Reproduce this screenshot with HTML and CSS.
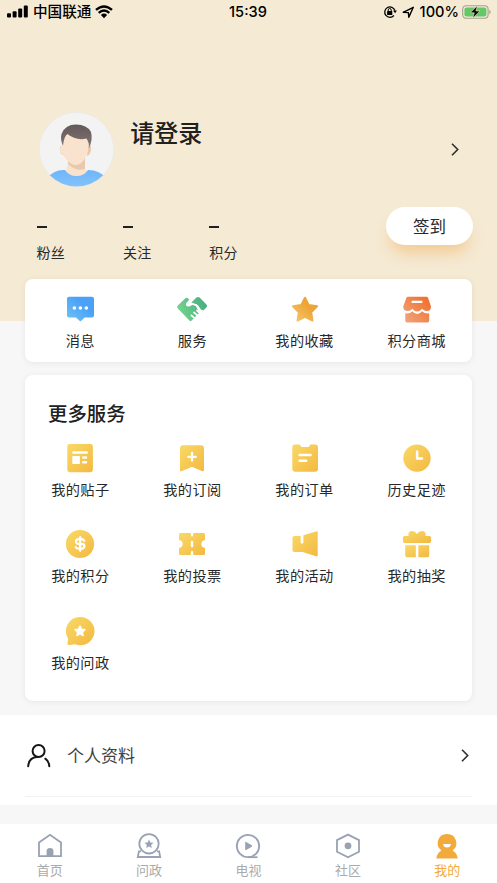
FILE: index.html
```html
<!DOCTYPE html>
<html lang="zh-CN">
<head>
<meta charset="utf-8">
<title>我的</title>
<link rel="stylesheet" href="styles.css">
</head>
<body>
<svg class="defs" aria-hidden="true">
  <defs>
    <linearGradient id="gold" x1="0" y1="0" x2="1" y2="1"><stop offset="0" stop-color="#f9d967"/><stop offset="1" stop-color="#f3b941"/></linearGradient>
    <linearGradient id="blue" x1="0" y1="1" x2="1" y2="0"><stop offset="0" stop-color="#6fc5f2"/><stop offset=".65" stop-color="#4ba0f8"/><stop offset="1" stop-color="#4ba0f8"/></linearGradient>
    <linearGradient id="green" gradientUnits="userSpaceOnUse" x1="-15" y1="5" x2="13" y2="-5"><stop offset="0" stop-color="#78d68c"/><stop offset="1" stop-color="#4baf83"/></linearGradient>
    <linearGradient id="amber" x1="0" y1="1" x2="1" y2="0"><stop offset="0" stop-color="#f3c96d"/><stop offset=".6" stop-color="#eea638"/><stop offset="1" stop-color="#ee9f30"/></linearGradient>
    <linearGradient id="orange" gradientUnits="userSpaceOnUse" x1="-12" y1="12" x2="12" y2="-10"><stop offset="0" stop-color="#f2a37c"/><stop offset="1" stop-color="#ee6f2d"/></linearGradient>
    <linearGradient id="hair" x1="0" y1="0" x2="0" y2="1"><stop offset="0" stop-color="#635858"/><stop offset="1" stop-color="#857575"/></linearGradient>
    <linearGradient id="shirt" x1="0" y1="0" x2="0" y2="1"><stop offset="0" stop-color="#6fb5fa"/><stop offset="1" stop-color="#83c3fa"/></linearGradient>
    <clipPath id="round"><circle cx="37.5" cy="37.5" r="37"/></clipPath>
  </defs>
</svg>

<header class="hero">
  <div class="status">
    <div class="carrier">
      <svg width="22" height="14" viewBox="0 0 22 14"><rect x="0" y="8.3" width="4" height="4.2" rx="1"/><rect x="5.6" y="6.2" width="4" height="6.3" rx="1"/><rect x="11.2" y="3.5" width="4" height="9" rx="1"/><rect x="16.8" y="0.5" width="4" height="12" rx="1"/></svg>
      <span>中国联通</span>
      <svg class="wifi" width="18" height="14" viewBox="0 0 18 14"><path d="M1 4.9Q9-2.1 17 4.9M3.7 7.9Q9 3.1 14.3 7.9" fill="none" stroke="#000" stroke-width="2.4"/><path d="M5.9 10Q9 7.2 12.1 10L9 13.2Z"/></svg>
    </div>
    <time>15:39</time>
    <div class="power">
      <svg width="14" height="14" viewBox="0 0 14 14"><path d="M10.9 10.5A5.2 5.2 0 1 1 11.9 5.5" fill="none" stroke="#000" stroke-width="1.3"/><path d="M10.1 5.4h3.8l-1.8 2.8z"/><rect x="4.1" y="6" width="5.2" height="4" rx=".5"/><path d="M5.2 6V5a1.5 1.5 0 0 1 3 0v1" fill="none" stroke="#000"/></svg>
      <svg class="locate" width="13" height="13" viewBox="0 0 13 13"><path d="M1.2 6.3 11.3 1.3 6.8 11.3 6.4 6.6Z" fill="none" stroke="#000" stroke-width="1.4" stroke-linejoin="round"/></svg>
      <span>100%</span>
      <svg width="29" height="14" viewBox="0 0 29 14"><rect x=".7" y=".7" width="25.4" height="12.6" rx="3.5" fill="none" stroke="#a79f90" stroke-width="1.1"/><rect x="2.4" y="2.4" width="22" height="9.2" rx="2" fill="#63c866"/><path d="M27.3 4.8q1.4.8 1.4 2.2t-1.4 2.2z" fill="#a79f90"/><path d="M15.4.8 8.3 7.8h4l-1.6 5.4 7.2-7.2h-4z" stroke="#f5ead4" stroke-width=".6"/></svg>
    </div>
  </div>

  <div class="user">
    <svg width="75" height="75" viewBox="0 0 75 75">
      <circle cx="37.5" cy="37.5" r="37.4" fill="#ebebeb"/><circle cx="37.5" cy="37.5" r="36.8" fill="#f3f3f3"/>
      <path d="M29 46h17v17H29z" fill="#e9c9ac"/>
      <path d="M29 52Q37 60 46 57L48 59Q46 66 37 65Q29 64 27 58Z" fill="#f9e3cf"/>
      <path clip-path="url(#round)" d="M8 66Q16 57 26 58Q30 64 37.5 64T49 58Q61 58 68 67V75H8Z" fill="url(#shirt)"/>
      <path d="M23 34q-3 0-2 5 1 4 4 4zM49 34q4-1 3 4-1 5-4 6z" fill="#ecc7a8"/>
      <path d="M24 28Q25 21 31 22Q38 27 49 25V35C49 44 43 53 37 53S25 45 24 42Q21 42 21 38T24 34Z" fill="#f9e3cf"/>
      <path d="M24 34Q21 27 22.5 22Q26 12.5 37 12.5Q48 12.5 52 20Q54 28 50 36Q50 30 47.5 26.5Q37 29 28.5 22Q25 24 24 34Z" fill="url(#hair)"/>
    </svg>
    <h1>请登录</h1>
    <svg class="go" width="8" height="13" viewBox="0 0 8 13"><path d="M1 .8 6.7 6.5 1 12.2"/></svg>
  </div>

  <div class="stats">
    <div class="stat"><i></i><span>粉丝</span></div>
    <div class="stat"><i></i><span>关注</span></div>
    <div class="stat"><i></i><span>积分</span></div>
    <button class="sign">签到</button>
  </div>
</header>

<main>
  <section class="card quick grid">
    <a><svg viewBox="-15 -15 30 30"><path d="M-11-12.3H12Q14-12.3 14-10.3V6.4Q14 8.4 12 8.4H4.7L1 12.1Q.4 12.6-.2 12.1L-4 8.4H-11Q-13 8.4-13 6.4V-10.3Q-13-12.3-11-12.3Z" fill="url(#blue)"/><g fill="#fff"><circle cx="-5.6" cy="-1" r="1.8"/><circle cx=".4" cy="-1" r="1.8"/><circle cx="6.3" cy="-1" r="1.8"/></g></svg>消息</a>
    <a><svg viewBox="-15 -15 30 30"><path d="M-6.6-10.8Q-5.5-11.9-4.4-10.8L-2.2-8.6 .6-11.4Q2-12.8 3.4-11.4L14.2-4.2Q15.4-3 14.2-1.8L1.2 11.5Q-.3 13-2 11.5L-14.2-.8Q-15.3-2-14.2-3.2Z" fill="none"/><path d="M-6.8-10.6Q-5.4-12-4-10.6L-2.4-9 -4.6-6.4Q-6.2-4.2-4-3.2 -1.8-2.6 .2-4.4L3.6-3.4 7.2 3.8 -.4 11.6Q-1.2 12.8-2.6 11.6L-14.2-.6Q-15.4-2-14.2-3.4ZM-.6-6.6 4.4-11.4Q6-12.8 7.6-11.4L14.4-4.4Q15.6-3 14.4-1.6L10.2 2.6 6-3.8Z" fill="url(#green)"/><path d="M-1.8-8.8-4.7-6Q-6-4.2-4.3-3.4-2.3-2.8 0-5L4.4-3.9 7.4 1 10.8 2M8.2 4.4l-3.8-3.2M5.8 6.6 1.4 3M3 9.4-1.2 6" fill="none" stroke="#fff" stroke-width="1.7" stroke-linejoin="round"/></svg>服务</a>
    <a><svg viewBox="-15 -15 30 30"><path d="M0-11.3 3.7-4.1 12-2.8 6.2 3.3 7.5 11.6 0 7.8-7.5 11.6-6.2 3.3-12-2.8-3.7-4.1Z" fill="url(#amber)" stroke="url(#amber)" stroke-width="2" stroke-linejoin="round"/></svg>我的收藏</a>
    <a><svg viewBox="-15 -15 30 30"><path d="M-9-12.3H9.5Q10.5-12.3 11-11.3L14-2.5Q14 2 9.6 2 7 2 5-.3 3 2.6.2 2.6T-4.6-.3Q-6.6 2-9.2 2-13.8 2-13.8-2.5L-10.6-11.3Q-10-12.3-9-12.3Z" fill="url(#orange)"/><path d="M-11.7 4.2Q-7.4 5-4.6 2.2-2.6 5 .2 5T5 2.2Q8 5 12.2 4.2V11.8Q12.2 13.5 10.5 13.5H-10Q-11.7 13.5-11.7 11.8Z" fill="url(#orange)"/><rect x="-5.5" y="-8.2" width="11" height="2.3" rx="1" fill="#fff"/></svg>积分商城</a>
  </section>

  <section class="card more">
    <h2>更多服务</h2>
    <div class="grid">
      <a><svg viewBox="-15 -15 30 30"><rect x="-12.7" y="-14" width="25.6" height="28.2" rx="2.4" fill="url(#gold)"/><path d="M-6.5-5.5H6.7M3.2-.6H6M3.2 4.2H6" stroke="#fff" stroke-width="2.5" stroke-linecap="round"/><rect x="-7.7" y="-2" width="7.6" height="8" rx=".8" fill="#fff"/></svg>我的贴子</a>
      <a><svg viewBox="-15 -15 30 30"><path d="M-9-12.7H9Q12-12.7 12-9.7V12Q12 13.8 10.4 13.2L0 8.8-10.4 13.2Q-12 13.8-12 12V-9.7Q-12-12.7-9-12.7Z" fill="url(#gold)"/><path d="M-3.8-1.2H3.8M0-5V2.6" stroke="#fff" stroke-width="2.3" stroke-linecap="round"/></svg>我的订阅</a>
      <a><svg viewBox="-15 -15 30 30"><path d="M-10.2-13.5H-6Q-4.8-13.5-4.6-12.5-4.3-11-3-11H3Q4.3-11 4.6-12.5 4.8-13.5 6-13.5H10Q13-13.5 13-10.5V10.7Q13 13.7 10 13.7H-9.7Q-12.7 13.7-12.7 10.7V-10.5Q-12.7-13.5-10.2-13.5Z" fill="url(#gold)"/><path d="M-5.4-3H5.6M-5.4 2.7H1.2" stroke="#fff" stroke-width="2.4" stroke-linecap="round"/></svg>我的订单</a>
      <a><svg viewBox="-15 -15 30 30"><circle cy=".1" r="13.7" fill="url(#gold)"/><path d="M.1-6.4V.4H5" fill="none" stroke="#fff" stroke-width="2.5" stroke-linecap="round" stroke-linejoin="round"/></svg>历史足迹</a>
      <a><svg viewBox="-15 -15 30 30"><circle r="14.1" fill="url(#gold)"/><path d="M4.2-3.3Q3.4-4.8 1-4.8H-1Q-4-4.8-4-2.4T-1-.1H1.4Q4.4-.1 4.4 2.2T1.4 4.7H-1Q-3.5 4.7-4.2 3.2M.2-6.8V6.8" fill="none" stroke="#fff" stroke-width="2.3" stroke-linecap="round"/></svg>我的积分</a>
      <a><svg viewBox="-15 -15 30 30"><path d="M-11.5-11H-1.2V-8.7Q-1.2-7.5 0-7.5T1.2-8.7V-11H11.5Q13-11 13-9.5V-4Q9.3-3.5 9.3 0T13 4V9.5Q13 11 11.5 11H1.2V8.2Q1.2 7 0 7T-1.2 8.2V11H-11.5Q-13 11-13 9.5V4Q-9.3 3.5-9.3 0T-13-4V-9.5Q-13-11-11.5-11Z" fill="url(#gold)"/><path d="M0-2V2" stroke="#fff" stroke-width="2.4" stroke-linecap="round"/></svg>我的投票</a>
      <a><svg viewBox="-15 -15 30 30"><path d="M-10.7-8H-4.4V-1.7Q-4.4-.3-3-.3T-1.6-1.7V-8.7L11-12.6Q12.7-13 12.7-11.2V11Q12.7 12.8 11 12.3L-2.4 8H-10.7Q-12.5 8-12.5 6.2V-6.2Q-12.5-8-10.7-8Z" fill="url(#gold)"/></svg>我的活动</a>
      <a><svg viewBox="-15 -15 30 30"><path d="M-12.6-8H-8.5Q-9.2-12.9-5-12.9-1.7-12.9 0-10 1.7-12.9 5-12.9 9.2-12.9 8.5-8H12.6Q14.1-8 14.1-6.5V-2.4Q14.1-1 12.6-1H-12.6Q-14-1-14-2.4V-6.5Q-14-8-12.6-8Z" fill="url(#gold)"/><path d="M-11.8 1.2H-1.2V13.2H-10Q-11.8 13.2-11.8 11.4ZM1.4 1.2H12.2V11.4Q12.2 13.2 10.4 13.2H1.4Z" fill="url(#gold)"/></svg>我的抽奖</a>
      <a><svg viewBox="-15 -15 30 30"><path d="M0-14A14.1 14.1 0 1 1-4.8 13.2L-10.8 13.9Q-13 14-12.5 12L-11.8 7.7A14.1 14.1 0 0 1 0-14Z" fill="url(#gold)"/><path d="M0-5.2 1.6-1.9 5.2-1.4 2.6 1.1 3.2 4.7 0 3-3.2 4.7-2.6 1.1-5.2-1.4-1.6-1.9Z" fill="#fff" stroke="#fff" stroke-width="1.2" stroke-linejoin="round"/></svg>我的问政</a>
    </div>
  </section>

  <section class="list">
    <a class="row">
      <svg width="24" height="24" viewBox="0 0 24 24" fill="none" stroke="#161616" stroke-width="2"><circle cx="11.6" cy="7" r="6"/><path d="M1.2 22.3Q1.8 13.7 10 13M18.3 14.7Q22.1 17.2 22.3 22.3" stroke-linecap="round"/></svg>
      <span>个人资料</span>
      <svg class="go" width="8" height="13" viewBox="0 0 8 13"><path d="M1 .8 6.7 6.5 1 12.2"/></svg>
    </a>
  </section>
</main>

<nav class="tabs">
  <a><svg viewBox="0 0 28 28"><path d="M3 10.5 14 2.8 25 10.5V24.2H3Z"/><path class="solid" d="M10.6 24V19.2Q10.6 16 14 16T17.4 19.2V24Z"/></svg>首页</a>
  <a><svg viewBox="0 0 28 28"><circle cx="14" cy="11.8" r="9.7"/><path d="M6 19.3H3.9L2.8 25H25.2L24.1 19.3H22"/><path class="solid" d="M14 7.5 15.3 10.4 18.5 10.8 16.1 12.9 16.8 16 14 14.5 11.2 16 11.9 12.9 9.5 10.8 12.7 10.4Z"/></svg>问政</a>
  <a><svg viewBox="0 0 28 28"><circle cx="14" cy="14" r="11.2"/><path d="M14 25.2H23.5"/><path class="solid" d="M11.2 10.5Q11.2 9.5 12.1 10L17.8 13.3Q18.8 14 17.8 14.7L12.1 18Q11.2 18.5 11.2 17.5Z"/></svg>电视</a>
  <a><svg viewBox="0 0 28 28"><path d="M14 2.6 25 8.1V19.7L14 25.3 3 19.7V8.1Z"/><circle class="solid" cx="14" cy="13.8" r="3.4"/></svg>社区</a>
  <a class="on"><svg viewBox="0 0 28 28"><path class="solid" d="M14 2A9.2 9.2 0 0 1 19.6 18.6Q23.4 20.5 24.7 25.9Q24.8 26.5 24 26.5H4Q3.2 26.5 3.3 25.9 4.6 20.5 8.4 18.6A9.2 9.2 0 0 1 14 2Z"/><path class="smile" d="M10 12H18Q17.5 15.5 14 15.5T10 12Z"/></svg>我的</a>
</nav>
</body>
</html>
```
FILE: styles.css
```css
* { box-sizing: border-box; }
body {
  margin: 0;
  height: 883px;
  display: flex;
  flex-direction: column;
  overflow: hidden;
  background: #f7f7f7;
  color: #282828;
  font-family: "Noto Sans CJK SC", sans-serif;
}
svg { display: block; flex: none; }
.defs { position: absolute; width: 0; height: 0; }
h1, h2 { margin: 0; font-weight: 500; color: #202020; }

.hero { height: 321px; flex: none; background: #f5ead4; }
.status {
  height: 24px;
  display: grid;
  grid-template-columns: 1fr auto 1fr;
  align-items: center;
  padding: 0 6px 0 7px;
  color: #000;
  font: 500 14.6px/24px Inter, "Noto Sans CJK SC", sans-serif;
}
.carrier, .power { display: flex; align-items: center; }
.carrier { gap: 4px; }
.status time { margin-left: -2px; }
.power { justify-content: flex-end; gap: 3px; }
.power .locate { margin: 0 2px; }

.user {
  display: flex;
  align-items: center;
  height: 75px;
  margin-top: 87.5px;
  padding: 0 38px 0 39.3px;
}
.user h1 {
  flex: 1;
  align-self: flex-start;
  margin-left: 16px;
  font-size: 24px;
  line-height: 40px;
}
.go { fill: none; stroke: #303030; stroke-width: 1.6; }

.stats {
  display: flex;
  align-items: flex-start;
  margin-top: 20px;
  padding: 0 24px 0 36.5px;
}
.stat { width: 86.4px; padding-top: 19.5px; font-size: 14px; letter-spacing: .3px; line-height: 20px; }
.stat i { display: block; width: 10px; height: 2px; margin-bottom: 14px; background: #202020; }
.sign {
  width: 87px;
  height: 38.5px;
  margin-left: auto;
  padding: 0;
  border: 0;
  border-radius: 20px;
  background: #fff;
  box-shadow: 0 12px 16px -5px rgba(242, 190, 120, .75);
  color: #282828;
  font: 16.5px/38px "Noto Sans CJK SC", sans-serif;
}

main { display: flex; flex-direction: column; margin-top: -42px; }
.card {
  margin: 0 25px;
  border-radius: 8px;
  background: #fff;
  box-shadow: 0 1px 6px rgba(0, 0, 0, .07);
}
.grid { display: grid; grid-template-columns: repeat(4, 112.1px); justify-content: center; }
.grid a {
  display: flex;
  flex-direction: column;
  align-items: center;
  font-size: 14.2px;
  letter-spacing: .4px;
  line-height: 20px;
}
.grid svg { width: 30px; height: 30px; }
.quick { height: 83px; padding-top: 15px; }
.quick a { gap: 6px; }
.more { height: 326px; margin-top: 13px; padding-top: 23px; }
.more h2 { padding-left: 23px; font-size: 19.4px; line-height: 30px; }
.more .grid { margin-top: 15px; grid-auto-rows: 86.3px; }
.more a { gap: 6px; }

.list { height: 90px; margin-top: 14px; padding: 0 25px; background: #fff; }
.row {
  display: flex;
  align-items: center;
  height: 82px;
  padding: 0 3px 0 2px;
  border-bottom: 1px solid #f3f3f3;
}
.row span { flex: 1; margin: -2px 0 0 16px; font-size: 17px; line-height: 24px; color: #404040; }

.tabs {
  display: grid;
  grid-template-columns: repeat(5, 1fr);
  height: 59px;
  margin-top: auto;
  padding-top: 8px;
  background: #fff;
}
.tabs a {
  display: flex;
  flex-direction: column;
  align-items: center;
  color: #aaa;
  font-size: 13px;
  line-height: 20px;
}
.tabs svg { width: 28px; height: 28px; fill: none; stroke: #98a2b2; stroke-width: 1.8; }
.tabs .solid { fill: #98a2b2; stroke: none; }
.tabs .on { color: #f2ab3a; }
.tabs .on .solid { fill: #f2ab3a; }
.tabs .smile { fill: #fff; stroke: none; }
```
